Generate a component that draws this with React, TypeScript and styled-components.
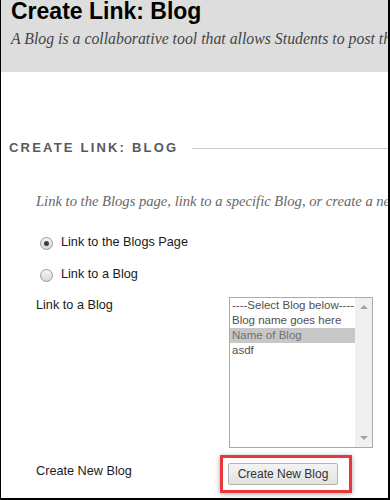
import React from 'react';
import styled, { createGlobalStyle } from 'styled-components';

// ------------
// Global Style
// ------------

const GlobalStyle = createGlobalStyle`
  body {
    margin: 0;
    background: #ffffff;
    font-family: 'Liberation Sans', Arial, sans-serif;
  }
`;

// -------------------
// Internal Components
// -------------------

const Frame = styled.div`
  width: 390px;
  height: 500px;
  box-sizing: border-box;
  border-left: 1px solid #000;
  border-right: 2px solid #000;
  border-bottom: 2px solid #000;
  overflow: hidden;
  background: #fff;
`;

const Header = styled.div`
  height: 72px;
  background: #dddddd;
  padding-left: 10px;
  overflow: hidden;
`;

const Title = styled.h1`
  margin: 0;
  font-size: 23px;
  line-height: 23px;
  font-weight: bold;
  color: #000;
  white-space: nowrap;
`;

const Subtitle = styled.p`
  margin: 6px 0 0;
  font-family: 'Liberation Serif', 'Times New Roman', serif;
  font-style: italic;
  font-size: 15.8px;
  line-height: 20px;
  color: #444;
  white-space: nowrap;
`;

const SectionHead = styled.div`
  display: flex;
  align-items: center;
  margin-top: 68px;
  padding-left: 8px;
`;

const SectionTitle = styled.h2`
  margin: 0;
  font-size: 13px;
  line-height: 16px;
  font-weight: bold;
  letter-spacing: 2.2px;
  color: #595959;
  white-space: nowrap;
`;

const Rule = styled.div`
  flex: 1;
  height: 1px;
  margin-left: 14px;
  background: #cccccc;
`;

const Instructions = styled.p`
  margin: 36px 0 0;
  padding-left: 35px;
  font-family: 'Liberation Serif', 'Times New Roman', serif;
  font-style: italic;
  font-size: 14.6px;
  line-height: 18px;
  color: #666666;
  white-space: nowrap;
`;

const RadioList = styled.div`
  margin-top: 16px;
  padding-left: 39px;
`;

const RadioRow = styled.label`
  display: flex;
  align-items: center;
  gap: 8px;
  height: 32px;
  font-size: 12.7px;
  color: #1a1a1a;
`;

const RadioDot = styled.span<{ $checked?: boolean }>`
  position: relative;
  width: 13px;
  height: 13px;
  box-sizing: border-box;
  margin-top: 2px;
  border-radius: 50%;
  border: 1px solid #9a9a9a;
  background: linear-gradient(#f4f4f4, #d8d8d8);

  &::after {
    content: '';
    display: ${p => (p.$checked ? 'block' : 'none')};
    position: absolute;
    left: 3px;
    top: 3px;
    width: 5px;
    height: 5px;
    border-radius: 50%;
    background: #3c3c3c;
  }
`;

const FormRow = styled.div<{ $top: number }>`
  display: flex;
  align-items: flex-start;
  margin-top: ${p => p.$top}px;
`;

const FieldLabel = styled.div<{ $offset?: number }>`
  width: 228px;
  flex: none;
  box-sizing: border-box;
  padding-left: 35px;
  padding-top: ${p => p.$offset || 0}px;
  font-size: 12.7px;
  line-height: 16px;
  color: #1a1a1a;
`;

const ListBox = styled.div`
  display: flex;
  width: 144px;
  height: 151px;
  box-sizing: border-box;
  border: 1px solid #a9a9a9;
  background: #fff;
`;

const Options = styled.div`
  flex: 1;
`;

const Option = styled.div<{ $selected?: boolean }>`
  height: 15px;
  line-height: 15px;
  padding-left: 2px;
  font-size: 11.5px;
  white-space: nowrap;
  color: ${p => (p.$selected ? '#707070' : '#505050')};
  background: ${p => (p.$selected ? '#c7c7c7' : 'transparent')};
`;

const ScrollTrack = styled.div`
  width: 17px;
  display: flex;
  flex-direction: column;
  justify-content: space-between;
  align-items: center;
  padding: 7px 0;
  background: #f0f0f0;
`;

const Arrow = styled.span<{ $down?: boolean }>`
  width: 0;
  height: 0;
  border-left: 4px solid transparent;
  border-right: 4px solid transparent;
  ${p => (p.$down ? 'border-top: 4px solid #a3a3a3;' : 'border-bottom: 4px solid #a3a3a3;')}
`;

const Highlight = styled.div`
  margin-left: -9px;
  padding: 5px 11px 5px 5px;
  border: 3px solid #e8383d;
  box-shadow: 0 1px 5px rgba(0, 0, 0, 0.35);
`;

const Button = styled.button`
  display: block;
  width: 110px;
  height: 22px;
  padding: 0;
  border: 1px solid #b4b4b4;
  border-radius: 2px;
  background: linear-gradient(#f3f3f3, #e2e2e2);
  font-family: 'Liberation Sans', Arial, sans-serif;
  font-size: 12px;
  color: #333;
`;

const blogs = ['----Select Blog below----', 'Blog name goes here', 'Name of Blog', 'asdf'];

export default function App() {
  return (
    <Frame>
      <GlobalStyle />
      <Header>
        <Title>Create Link: Blog</Title>
        <Subtitle>A Blog is a collaborative tool that allows Students to post their thoughts and ideas.</Subtitle>
      </Header>
      <SectionHead>
        <SectionTitle>CREATE LINK: BLOG</SectionTitle>
        <Rule />
      </SectionHead>
      <Instructions>
        Link to the Blogs page, link to a specific Blog, or create a new Blog to link to.
      </Instructions>
      <RadioList>
        <RadioRow>
          <RadioDot $checked />
          Link to the Blogs Page
        </RadioRow>
        <RadioRow>
          <RadioDot />
          Link to a Blog
        </RadioRow>
      </RadioList>
      <FormRow $top={7}>
        <FieldLabel>Link to a Blog</FieldLabel>
        <ListBox>
          <Options>
            {blogs.map(b => (
              <Option key={b} $selected={b === 'Name of Blog'}>
                {b}
              </Option>
            ))}
          </Options>
          <ScrollTrack>
            <Arrow />
            <Arrow $down />
          </ScrollTrack>
        </ListBox>
      </FormRow>
      <FormRow $top={7}>
        <FieldLabel $offset={8}>Create New Blog</FieldLabel>
        <Highlight>
          <Button>Create New Blog</Button>
        </Highlight>
      </FormRow>
    </Frame>
  );
}
